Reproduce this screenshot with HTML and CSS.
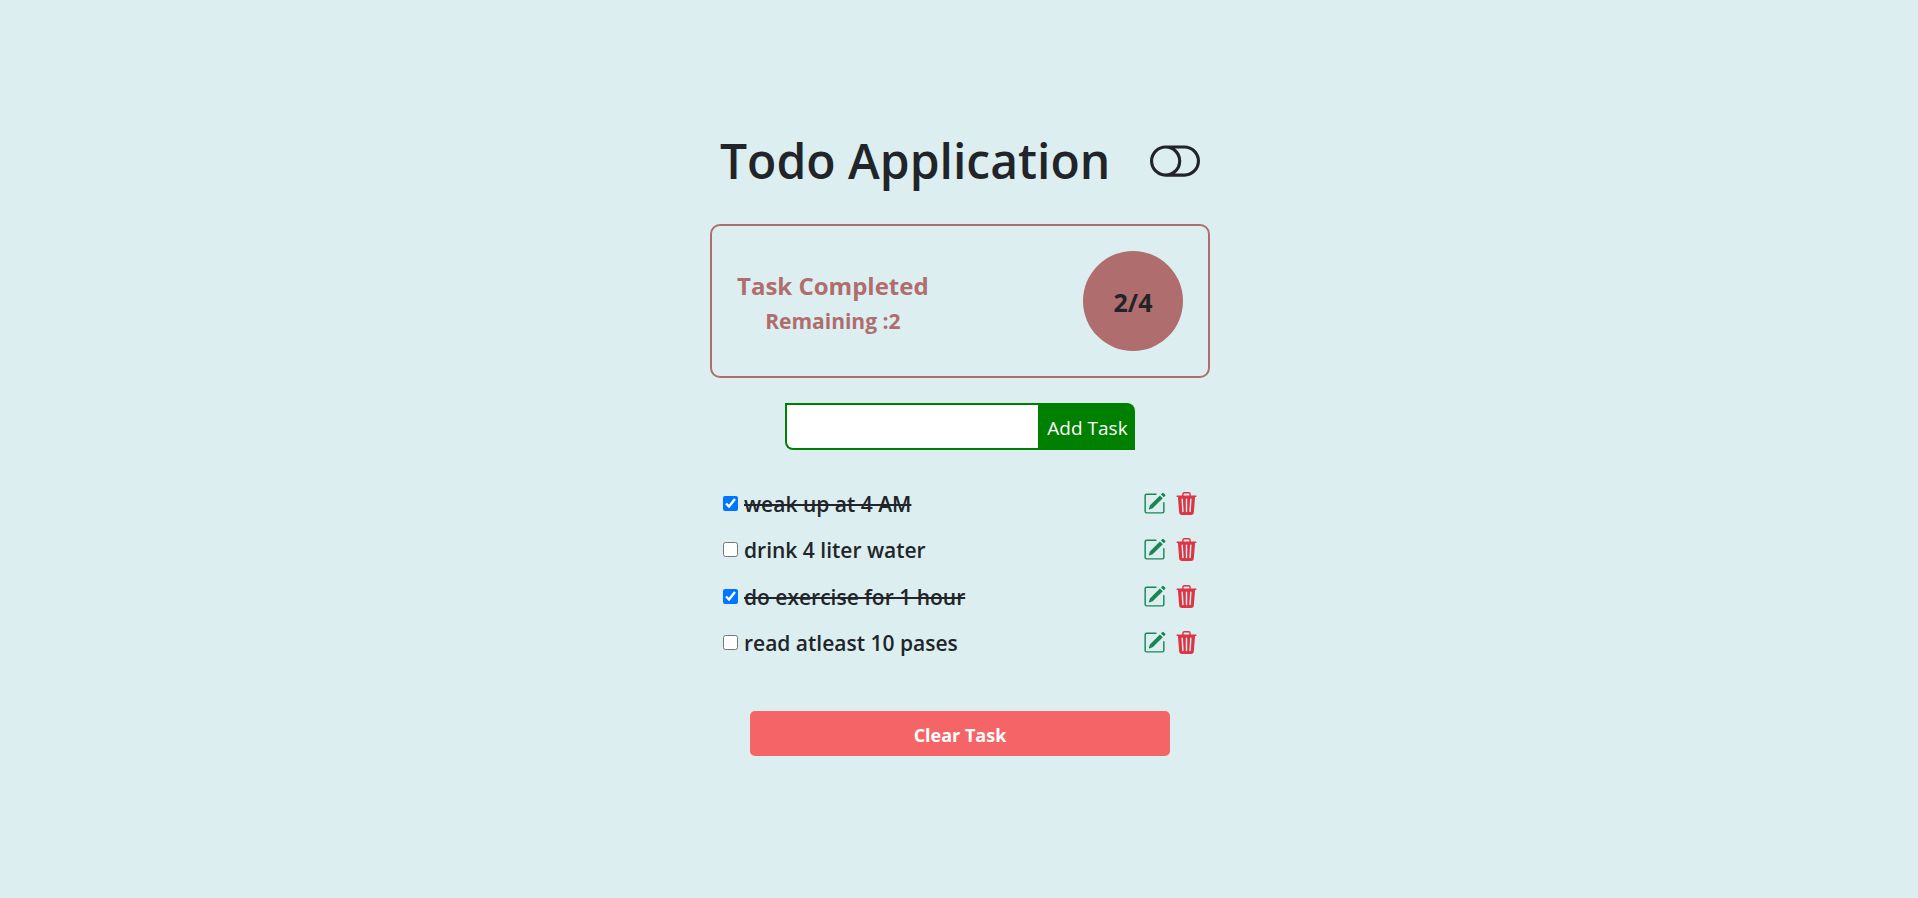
FILE: index.html
```html
<!DOCTYPE html>
<html lang="en">
<head>
<meta charset="utf-8">
<meta name="viewport" content="width=device-width, initial-scale=1">
<title>Todo Application</title>
<link rel="stylesheet" href="styles.css">
</head>
<body>
<svg class="sprite" aria-hidden="true">
  <symbol id="pencil" viewBox="0 0 16 16"><path d="M15.502 1.94a.5.5 0 0 1 0 .706L14.459 3.69l-2-2L13.502.646a.5.5 0 0 1 .707 0l1.293 1.293zm-1.75 2.456-2-2L4.939 9.21a.5.5 0 0 0-.121.196l-.805 2.414a.25.25 0 0 0 .316.316l2.414-.805a.5.5 0 0 0 .196-.12l6.813-6.814z"/><path d="M1 13.5A1.5 1.5 0 0 0 2.5 15h11a1.5 1.5 0 0 0 1.5-1.5v-6a.5.5 0 0 0-1 0v6a.5.5 0 0 1-.5.5h-11a.5.5 0 0 1-.5-.5v-11a.5.5 0 0 1 .5-.5H9a.5.5 0 0 0 0-1H2.5A1.5 1.5 0 0 0 1 2.5z"/></symbol>
  <symbol id="trash" viewBox="0 0 16 16"><path d="M11 1.5v1h3.5a.5.5 0 0 1 0 1h-.538l-.853 10.66A2 2 0 0 1 11.115 16h-6.23a2 2 0 0 1-1.994-1.84L2.038 3.5H1.5a.5.5 0 0 1 0-1H5v-1A1.5 1.5 0 0 1 6.5 0h3A1.5 1.5 0 0 1 11 1.5m-5 0v1h4v-1a.5.5 0 0 0-.5-.5h-3a.5.5 0 0 0-.5.5M4.5 5.029l.5 8.5a.5.5 0 1 0 .998-.06l-.5-8.5a.5.5 0 1 0-.998.06m6.53-.528a.5.5 0 0 0-.528.47l-.5 8.5a.5.5 0 0 0 .998.058l.5-8.5a.5.5 0 0 0-.47-.528M8 4.5a.5.5 0 0 0-.5.5v8.5a.5.5 0 0 0 1 0V5a.5.5 0 0 0-.5-.5"/></symbol>
</svg>
<main class="app">
  <header class="header">
    <h1 class="title">Todo Application</h1>
    <button class="icon-button" type="button" aria-label="Toggle theme">
      <svg class="toggle-icon" viewBox="0 0 16 16"><path d="M11 4a4 4 0 0 1 0 8H8a5 5 0 0 0 2-4 5 5 0 0 0-2-4zm-6 8a4 4 0 1 1 0-8 4 4 0 0 1 0 8M0 8a5 5 0 0 0 5 5h6a5 5 0 0 0 0-10H5a5 5 0 0 0-5 5"/></svg>
    </button>
  </header>
  <section class="summary">
    <div class="summary-text">
      <h2 class="summary-title">Task Completed</h2>
      <p class="summary-remaining">Remaining :2</p>
    </div>
    <div class="counter">2/4</div>
  </section>
  <form class="add-form">
    <input class="add-input" type="text" aria-label="New task">
    <button class="add-button" type="button">Add Task</button>
  </form>
  <ul class="tasks">
    <li class="task">
      <input class="check" type="checkbox" id="task-1" checked>
      <label class="task-name" for="task-1">weak up at 4 AM</label>
      <button class="icon-button edit" type="button" aria-label="Edit"><svg class="icon"><use href="#pencil"/></svg></button>
      <button class="icon-button delete" type="button" aria-label="Delete"><svg class="icon"><use href="#trash"/></svg></button>
    </li>
    <li class="task">
      <input class="check" type="checkbox" id="task-2">
      <label class="task-name" for="task-2">drink 4 liter water</label>
      <button class="icon-button edit" type="button" aria-label="Edit"><svg class="icon"><use href="#pencil"/></svg></button>
      <button class="icon-button delete" type="button" aria-label="Delete"><svg class="icon"><use href="#trash"/></svg></button>
    </li>
    <li class="task">
      <input class="check" type="checkbox" id="task-3" checked>
      <label class="task-name" for="task-3">do exercise for 1 hour</label>
      <button class="icon-button edit" type="button" aria-label="Edit"><svg class="icon"><use href="#pencil"/></svg></button>
      <button class="icon-button delete" type="button" aria-label="Delete"><svg class="icon"><use href="#trash"/></svg></button>
    </li>
    <li class="task">
      <input class="check" type="checkbox" id="task-4">
      <label class="task-name" for="task-4">read atleast 10 pases</label>
      <button class="icon-button edit" type="button" aria-label="Edit"><svg class="icon"><use href="#pencil"/></svg></button>
      <button class="icon-button delete" type="button" aria-label="Delete"><svg class="icon"><use href="#trash"/></svg></button>
    </li>
  </ul>
  <button class="clear-button" type="button">Clear Task</button>
</main>
</body>
</html>
```

FILE: styles.css
```css
*,
*::before,
*::after {
  box-sizing: border-box;
}

body {
  margin: 0;
  min-height: 100vh;
  padding: 0 0 11px 2px;
  display: flex;
  justify-content: center;
  align-items: center;
  background: #dceef0;
  color: #212529;
  font-family: "Segoe UI", "Open Sans", "Noto Sans", sans-serif;
}

h1, h2, p, ul {
  margin: 0;
  padding: 0;
}

button,
input {
  font: inherit;
}

.sprite {
  position: absolute;
  width: 0;
  height: 0;
}

.app {
  width: 100%;
  max-width: 500px;
  display: flex;
  flex-direction: column;
}

.header {
  display: flex;
  justify-content: space-between;
  align-items: center;
  padding: 0 10px;
  margin-bottom: 33px;
}

.title {
  font-size: 48px;
  font-weight: 600;
  line-height: 60px;
}

.icon-button {
  display: flex;
  padding: 0;
  border: 0;
  background: none;
  color: inherit;
  cursor: pointer;
}

.toggle-icon {
  width: 50px;
  height: 50px;
  fill: currentColor;
}

.summary {
  display: flex;
  justify-content: space-between;
  align-items: center;
  padding: 25px;
  border: 2px solid #b06d6d;
  border-radius: 10px;
  color: #b06d6d;
}

.summary-text {
  padding-top: 2px;
  text-align: center;
}

.summary-title {
  font-size: 24px;
  font-weight: 700;
  line-height: 38px;
}

.summary-remaining {
  font-size: 21px;
  font-weight: 700;
  line-height: 32px;
}

.counter {
  display: flex;
  align-items: center;
  justify-content: center;
  width: 100px;
  height: 100px;
  padding-top: 2px;
  border-radius: 50%;
  background: #b06d6d;
  color: #212529;
  font-size: 25px;
  font-weight: 700;
}

.add-form {
  display: flex;
  align-self: center;
  width: 70%;
  margin: 25px 0 30px;
}

.add-input {
  flex: 1;
  min-width: 0;
  height: 47px;
  padding: 0 10px;
  border: 2px solid #008000;
  border-right: 0;
  border-radius: 0 0 0 8px;
  background: #fff;
  font-size: 21px;
}

.add-button {
  width: 97px;
  padding: 2px 0 0 2px;
  border: 0;
  border-radius: 0 8px 0 0;
  background: #008000;
  color: #fff;
  font-size: 19px;
}

.tasks {
  list-style: none;
  display: grid;
  grid-auto-rows: 1fr;
  min-height: 186px;
  padding: 0 12px 0 13px;
}

.task {
  display: flex;
  align-items: center;
}

.check {
  width: 15px;
  height: 15px;
  margin: 0 6px 0 0;
}

.task-name {
  flex: 1;
  padding-top: 1px;
  font-size: 21px;
  font-weight: 600;
}

.check:checked + .task-name {
  text-decoration: line-through;
}

.icon {
  width: 23px;
  height: 23px;
  fill: currentColor;
}

.edit {
  color: #198754;
}

.delete {
  margin-left: 9px;
  color: #dc3545;
}

.clear-button {
  align-self: center;
  width: 84%;
  height: 45px;
  margin-top: 45px;
  padding: 2px 0 0;
  border: 0;
  border-radius: 5px;
  background: #f56568;
  color: #fff;
  font-size: 18px;
  font-weight: 700;
}
```
